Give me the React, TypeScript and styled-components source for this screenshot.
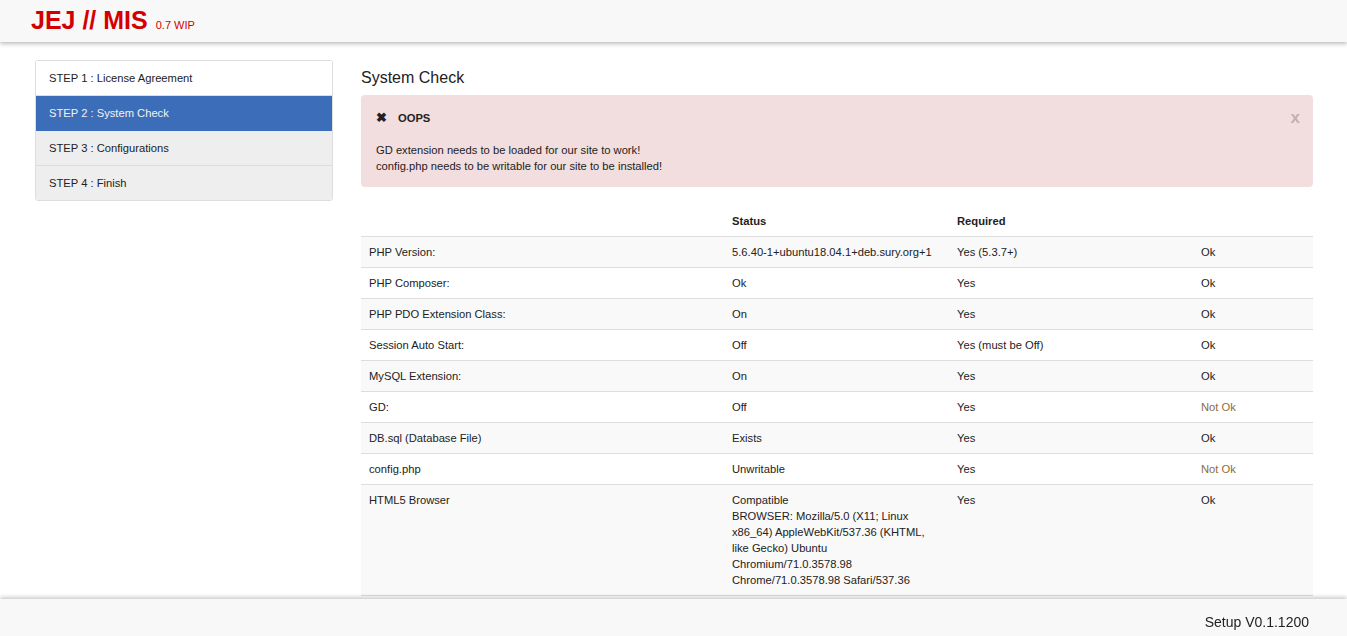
import React from 'react';
import styled, {createGlobalStyle} from 'styled-components';

const GlobalStyle = createGlobalStyle`
    html, body {
        margin: 0;
        padding: 0;
        background: #fff;
        font-family: "Liberation Sans", Arial, sans-serif;
        font-size: 11.2px;
        color: #222;
    }
    * {
        box-sizing: border-box;
    }
`;

const Header = styled.header`
    height: 42px;
    background: #f8f8f8;
    box-shadow: 0 2px 4px rgba(0, 0, 0, 0.25);
    display: flex;
    align-items: baseline;
    padding: 5px 0 0 31px;
`;

const Brand = styled.span`
    font-size: 25px;
    font-weight: bold;
    color: #d40000;
    line-height: 30px;
`;

const Version = styled.span`
    font-size: 11px;
    color: #d40000;
    margin-left: 8px;
`;

const Main = styled.div`
    display: flex;
    align-items: flex-start;
    gap: 28px;
    padding: 18px 34px 60px 35px;
`;

const StepList = styled.div`
    width: 298px;
    flex-shrink: 0;
    border: 1px solid #ddd;
    border-radius: 3px;
    overflow: hidden;
`;

const Step = styled.div<{ $state: 'done' | 'active' | 'todo' }>`
    padding: 10px 13px;
    line-height: 14px;
    border-bottom: 1px solid ${p => p.$state === 'active' ? '#3c6db9' : '#ddd'};
    background: ${p => p.$state === 'active' ? '#3c6db9' : p.$state === 'done' ? '#fff' : '#eee'};
    color: ${p => p.$state === 'active' ? '#f2f2f2' : '#222'};
    &:last-child {
        border-bottom: none;
    }
`;

const Content = styled.div`
    flex: 1;
    min-width: 0;
`;

const Title = styled.h3`
    margin: 0;
    font-size: 16px;
    font-weight: normal;
    line-height: 18px;
    padding: 9px 0 8px;
    color: #222;
`;

const Alert = styled.div`
    position: relative;
    background: #f2dede;
    border-radius: 4px;
    padding: 16px 15px 13px;
    color: #222;
`;

const AlertHead = styled.div`
    font-weight: bold;
    line-height: 14px;
    display: flex;
    align-items: center;
    gap: 11px;
`;

const Cross = styled.span`
    font-size: 13px;
`;

const AlertBody = styled.div`
    margin-top: 17px;
    line-height: 16px;
`;

const Close = styled.span`
    position: absolute;
    right: 13px;
    top: 13px;
    font-size: 17px;
    font-weight: bold;
    color: #000;
    opacity: 0.2;
`;

const Table = styled.table`
    width: 100%;
    table-layout: fixed;
    border-collapse: collapse;
    margin-top: 19px;
`;

const Th = styled.th<{ $w?: number }>`
    text-align: left;
    padding: 7px 8px;
    line-height: 16px;
    font-weight: bold;
    border-bottom: 1px solid #ddd;
    width: ${p => p.$w ? `${p.$w}px` : 'auto'};
`;

const Row = styled.tr`
    &:nth-child(odd) {
        background: #f9f9f9;
    }
`;

const Td = styled.td<{ $warn?: boolean }>`
    padding: 7px 8px;
    line-height: 16px;
    vertical-align: top;
    border-bottom: 1px solid #ddd;
    color: ${p => p.$warn ? '#8a6d3b' : '#222'};
`;

const Footer = styled.footer`
    position: fixed;
    left: 0;
    right: 0;
    bottom: 0;
    height: 37px;
    background: #f8f8f8;
    box-shadow: 0 -2px 4px rgba(0, 0, 0, 0.2);
    display: flex;
    align-items: flex-start;
    justify-content: flex-end;
    padding: 15px 38px 0 0;
    font-size: 14px;
    line-height: 16px;
    color: #222;
`;

const checks: [string, React.ReactNode, string, string][] = [
    ['PHP Version:', '5.6.40-1+ubuntu18.04.1+deb.sury.org+1', 'Yes (5.3.7+)', 'Ok'],
    ['PHP Composer:', 'Ok', 'Yes', 'Ok'],
    ['PHP PDO Extension Class:', 'On', 'Yes', 'Ok'],
    ['Session Auto Start:', 'Off', 'Yes (must be Off)', 'Ok'],
    ['MySQL Extension:', 'On', 'Yes', 'Ok'],
    ['GD:', 'Off', 'Yes', 'Not Ok'],
    ['DB.sql (Database File)', 'Exists', 'Yes', 'Ok'],
    ['config.php', 'Unwritable', 'Yes', 'Not Ok'],
    ['HTML5 Browser', <>Compatible<br/>BROWSER: Mozilla/5.0 (X11; Linux x86_64) AppleWebKit/537.36 (KHTML, like Gecko) Ubuntu Chromium/71.0.3578.98 Chrome/71.0.3578.98 Safari/537.36</>, 'Yes', 'Ok'],
];

function App() {
    return (
        <>
            <GlobalStyle/>
            <Header>
                <Brand>JEJ // MIS</Brand>
                <Version>0.7 WIP</Version>
            </Header>
            <Main>
                <StepList>
                    <Step $state={'done'}>STEP 1 : License Agreement</Step>
                    <Step $state={'active'}>STEP 2 : System Check</Step>
                    <Step $state={'todo'}>STEP 3 : Configurations</Step>
                    <Step $state={'todo'}>STEP 4 : Finish</Step>
                </StepList>
                <Content>
                    <Title>System Check</Title>
                    <Alert>
                        <Close>x</Close>
                        <AlertHead><Cross>✖</Cross>OOPS</AlertHead>
                        <AlertBody>
                            GD extension needs to be loaded for our site to work!<br/>
                            config.php needs to be writable for our site to be installed!
                        </AlertBody>
                    </Alert>
                    <Table>
                        <thead>
                        <tr>
                            <Th $w={363}></Th>
                            <Th $w={225}>Status</Th>
                            <Th $w={244}>Required</Th>
                            <Th></Th>
                        </tr>
                        </thead>
                        <tbody>
                        {checks.map((c, i) => (
                            <Row key={i}>
                                <Td>{c[0]}</Td>
                                <Td>{c[1]}</Td>
                                <Td>{c[2]}</Td>
                                <Td $warn={c[3] !== 'Ok'}>{c[3]}</Td>
                            </Row>
                        ))}
                        </tbody>
                    </Table>
                </Content>
            </Main>
            <Footer>Setup V0.1.1200</Footer>
        </>
    );
}

export default App;
